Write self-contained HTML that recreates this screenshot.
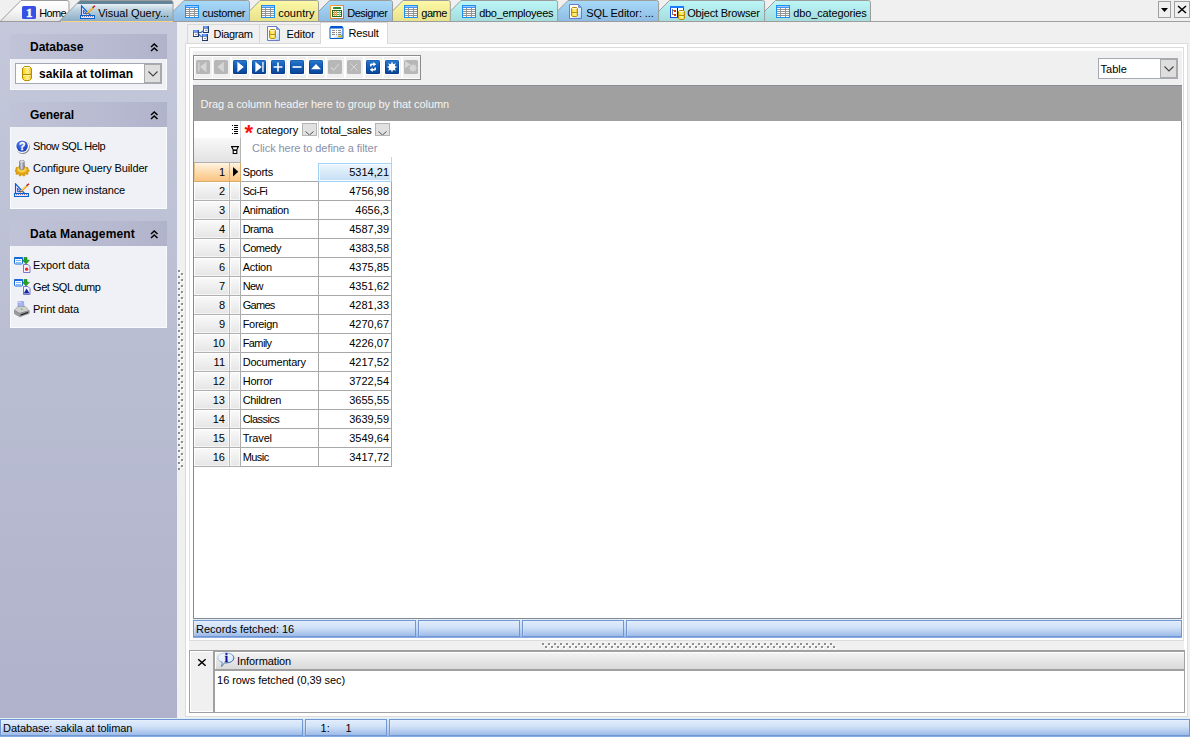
<!DOCTYPE html>
<html><head><meta charset="utf-8"><title>Visual Query Builder - Result</title>
<style>
*{box-sizing:border-box;margin:0;padding:0}
html,body{width:1190px;height:737px;overflow:hidden;background:#f0f0f0}
body{font-family:"Liberation Sans",sans-serif;font-size:11px;color:#000;position:relative}
div,span,svg{position:absolute}
.t{white-space:nowrap;line-height:12px;font-size:11px}
.t.b{font-weight:bold;font-size:12px;line-height:14px}
svg text{font-family:"Liberation Sans",sans-serif;font-size:11px}
#side{left:0;top:22px;width:177px;height:696px;background:linear-gradient(#c4c8da,#afb2ca)}
.ph{left:10px;width:157px;height:25px;background:linear-gradient(90deg,#c1c4d8 0,#bbbed3 40%,#b1b3cb 100%)}
.pc{left:10px;width:157px;background:#eff1f7;border:1px solid #fafbfd;border-top:none}
.frame{border:1px solid #dcdcdc;background:#fff}
.bluebar{background:linear-gradient(#e6f0fc 0,#dae7fa 12%,#c6daf5 50%,#a2bfea 88%,#7fa7e1 100%)}
.sec{border:1px solid #7197d3;background:linear-gradient(#e0ecfc 0,#d3e3f8 40%,#bdd3f2 65%,#9dbbe9 100%);box-shadow:inset 1px 1px 0 rgba(255,255,255,.2)}
.rh{left:194px;width:47px;height:19px;background:linear-gradient(#fafafa,#e5e5e5);border-right:1px solid #adadad;border-bottom:1px solid #b0b0b0;box-shadow:inset 1px 1px 0 #fff,inset -1px -1px 0 rgba(255,255,255,.6)}
.rh i{position:absolute;left:0;top:0;width:36px;height:18px;border-right:1px solid #b8b8b8;box-shadow:1px 0 0 rgba(255,255,255,.8),inset -1px 0 0 rgba(255,255,255,.6)}
.c1{left:241px;width:78px;height:19px;border-right:1px solid #a8a8a8;border-bottom:1px solid #a8a8a8;background:#fff}
.c2{left:319px;width:73px;height:19px;border-right:1px solid #a8a8a8;border-bottom:1px solid #a8a8a8;background:#fff}
.ddb{width:15px;height:13px;background:#e1e1e1;border:1px solid #b4b4b4;overflow:hidden}
.tb{width:14px;height:14px;top:60px;border-radius:1.5px}
.tb.on{background:linear-gradient(#2f80d4 0,#1c68c0 25%,#0f56ae 60%,#084494 100%);box-shadow:0 0 0 1px #fff,inset 0 0 0 1px rgba(0,40,110,.3)}
.tb.off{background:#b7b7b7}
.tc{top:57px;width:17px;height:21px;background:#f0f0f0}
</style></head>
<body>
<svg width="0" height="0" style="left:-10px"><defs>
<linearGradient id="gdb" x1="0" x2="1" y1="0" y2="0"><stop offset="0" stop-color="#f4c818"/><stop offset=".35" stop-color="#ffe850"/><stop offset=".6" stop-color="#fff0a0"/><stop offset="1" stop-color="#ecb810"/></linearGradient>
<linearGradient id="gdoc" x1="0" x2="1" y1="0" y2="1"><stop offset="0" stop-color="#fff"/><stop offset=".5" stop-color="#f4f8ff"/><stop offset="1" stop-color="#a4d4f8"/></linearGradient>
<linearGradient id="gor" x1="0" x2="1" y1="0" y2="1"><stop offset="0" stop-color="#f8a840"/><stop offset="1" stop-color="#b87430"/></linearGradient>
<linearGradient id="gres" x1="0" x2="1" y1="0" y2="1"><stop offset="0" stop-color="#fff"/><stop offset=".5" stop-color="#fff"/><stop offset="1" stop-color="#80b8ff"/></linearGradient>
<radialGradient id="ghelp" cx=".4" cy=".3" r=".8"><stop offset="0" stop-color="#5c84f0"/><stop offset=".6" stop-color="#2450d0"/><stop offset="1" stop-color="#1838a8"/></radialGradient>
<linearGradient id="gcyl" x1="0" x2="1" y1="0" y2="0"><stop offset="0" stop-color="#888894"/><stop offset=".4" stop-color="#d0d0dc"/><stop offset="1" stop-color="#80808c"/></linearGradient>
<linearGradient id="ginfo" x1="0" x2="1" y1="0" y2="1"><stop offset="0" stop-color="#f4f9ff"/><stop offset="1" stop-color="#cfe4fa"/></linearGradient>
<linearGradient id="ginfos" x1="0" x2="1" y1="0" y2="1"><stop offset="0" stop-color="#d4e4f8"/><stop offset=".4" stop-color="#86a6d2"/><stop offset=".75" stop-color="#2c5696"/><stop offset="1" stop-color="#1c4484"/></linearGradient>
<linearGradient id="tHome" x1="0" x2="0" y1="0" y2="1"><stop offset="0" stop-color="#fff"/><stop offset=".5" stop-color="#f6f6f6"/><stop offset="1" stop-color="#e2e2e2"/></linearGradient>
<linearGradient id="tBlue" x1="0" x2="0" y1="0" y2="1"><stop offset="0" stop-color="#a8dafa"/><stop offset="1" stop-color="#8ebbe2"/></linearGradient>
<linearGradient id="tYel" x1="0" x2="0" y1="0" y2="1"><stop offset="0" stop-color="#fdf9a6"/><stop offset="1" stop-color="#e8e18c"/></linearGradient>
<linearGradient id="tCyan" x1="0" x2="0" y1="0" y2="1"><stop offset="0" stop-color="#bcf6f6"/><stop offset="1" stop-color="#a4dcdc"/></linearGradient>
<linearGradient id="tAct" x1="0" x2="0" y1="0" y2="1"><stop offset="0" stop-color="#5e8299"/><stop offset=".17" stop-color="#628599"/><stop offset=".19" stop-color="#e6eef4"/><stop offset=".45" stop-color="#bcd2e0"/><stop offset="1" stop-color="#88acc6"/></linearGradient>
</defs></svg>
<svg id="tabbar" width="1190" height="23" style="left:0;top:0"><rect x="0" y="21" width="1190" height="1" fill="#a0a0a0"/><path d="M0,21.5L21,.5H67Q69,.5 69,2.5V21.5z" fill="url(#tHome)" stroke="#9c9c9c"/><g transform="translate(22,6)"><rect x="0" y="0" width="14" height="13" rx="1.6" fill="#3650e4"/><text x="7.2" y="11" text-anchor="middle" font-weight="bold" fill="#fff" stroke="#fff" stroke-width=".5" style="font-family:'Liberation Serif',serif;font-size:13px">1</text></g><text x="39.2" y="17" letter-spacing="-0.60">Home</text><path d="M754.5,21.5L775.5,.5H868.5Q870.5,.5 870.5,2.5V21.5z" fill="url(#tCyan)" stroke="#9c9c9c"/><g transform="translate(776,5)"><rect x=".5" y=".5" width="13" height="12" fill="#fff" stroke="#1c90f0"/><rect x="1" y="1" width="12" height="1" fill="#9cc8ff"/><rect x="1" y="2" width="12" height="1" fill="#3c96f4"/><rect x="1" y="4" width="12" height="1" fill="#949494"/><rect x="1" y="6" width="12" height="1" fill="#949494"/><rect x="1" y="8" width="12" height="1" fill="#949494"/><rect x="1" y="10" width="12" height="1" fill="#949494"/><rect x="4" y="3" width="1" height="9" fill="#949494"/><rect x="9" y="3" width="1" height="9" fill="#949494"/></g><text x="793.2" y="17" letter-spacing="-0.13">dbo_categories</text><path d="M648.5,21.5L669.5,.5H762.6Q764.6,.5 764.6,2.5V21.5z" fill="url(#tCyan)" stroke="#9c9c9c"/><g transform="translate(670,6)"><rect x=".5" y=".5" width="13" height="11" fill="#fff" stroke="#1644f0"/><rect x="0" y="0" width="14" height="2" fill="#1c7cff"/><path d="M2.5,3v6M2.5,4.5h2M2.5,8.5h2" stroke="#707880" fill="none"/><rect x="4" y="4" width="2" height="2" fill="#d03810"/><rect x="4" y="8" width="2" height="2" fill="#d03810"/><rect x="7" y="2" width="1" height="9" fill="#202020"/><g transform="translate(8,4)"><path d="M1.5,.5h4l1,1v7l-1,1h-4l-1,-1v-7z" fill="url(#gdb)" stroke="#b98d00"/><path d="M1.2,1.5h4.6" stroke="#fffbe0" stroke-width="1"/><path d="M1,5.5h5" stroke="#b98d00"/><path d="M1.5,6.5h4" stroke="#fff4a0"/></g></g><text x="687.2" y="17" letter-spacing="-0.19">Object Browser</text><path d="M547,21.5L568,.5H656.6Q658.6,.5 658.6,2.5V21.5z" fill="url(#tBlue)" stroke="#9c9c9c"/><g transform="translate(569,4)"><path d="M.5,.5h9l3,3v11h-12z" fill="url(#gdoc)" stroke="#6c7cc4"/><path d="M9.5,.5v3h3z" fill="#48a4ff" stroke="#6c7cc4" stroke-width=".6"/><g transform="translate(2,3)"><path d="M1.5,.5h4l1,1v7l-1,1h-4l-1,-1v-7z" fill="url(#gdb)" stroke="#b98d00"/><path d="M1.2,1.5h4.6" stroke="#fffbe0" stroke-width="1"/><path d="M1,5.5h5" stroke="#b98d00"/><path d="M1.5,6.5h4" stroke="#fff4a0"/></g></g><text x="586.2" y="17" letter-spacing="-0.07">SQL Editor: ...</text><path d="M440,21.5L461,.5H555.6Q557.6,.5 557.6,2.5V21.5z" fill="url(#tCyan)" stroke="#9c9c9c"/><g transform="translate(462,5)"><rect x=".5" y=".5" width="13" height="12" fill="#fff" stroke="#1c90f0"/><rect x="1" y="1" width="12" height="1" fill="#9cc8ff"/><rect x="1" y="2" width="12" height="1" fill="#3c96f4"/><rect x="1" y="4" width="12" height="1" fill="#949494"/><rect x="1" y="6" width="12" height="1" fill="#949494"/><rect x="1" y="8" width="12" height="1" fill="#949494"/><rect x="1" y="10" width="12" height="1" fill="#949494"/><rect x="4" y="3" width="1" height="9" fill="#949494"/><rect x="9" y="3" width="1" height="9" fill="#949494"/></g><text x="479.2" y="17" letter-spacing="-0.28">dbo_employees</text><path d="M382,21.5L403,.5H448.3Q450.3,.5 450.3,2.5V21.5z" fill="url(#tYel)" stroke="#9c9c9c"/><g transform="translate(404,5)"><rect x=".5" y=".5" width="13" height="12" fill="#fff" stroke="#1c90f0"/><rect x="1" y="1" width="12" height="1" fill="#9cc8ff"/><rect x="1" y="2" width="12" height="1" fill="#3c96f4"/><rect x="1" y="4" width="12" height="1" fill="#949494"/><rect x="1" y="6" width="12" height="1" fill="#949494"/><rect x="1" y="8" width="12" height="1" fill="#949494"/><rect x="1" y="10" width="12" height="1" fill="#949494"/><rect x="4" y="3" width="1" height="9" fill="#949494"/><rect x="9" y="3" width="1" height="9" fill="#949494"/></g><text x="421.2" y="17" letter-spacing="-0.43">game</text><path d="M308.5,21.5L329.5,.5H390.5Q392.5,.5 392.5,2.5V21.5z" fill="url(#tBlue)" stroke="#9c9c9c"/><g transform="translate(330,5)"><rect x=".5" y=".5" width="13" height="13" fill="#fff" stroke="url(#gor)"/><rect x="3" y="2" width="8" height="2" rx=".6" fill="#2a8c2a"/><rect x="2.5" y="5.5" width="9" height="6" fill="#fff" stroke="#1e6e1e"/><path d="M3,7.5h8M3,9.5h8" stroke="#48b048"/><path d="M4.5,6v5M6.5,6v5M9.5,6v5" stroke="#e8a868"/></g><text x="347.2" y="17" letter-spacing="-0.47">Designer</text><path d="M239,21.5L260,.5H316.5Q318.5,.5 318.5,2.5V21.5z" fill="url(#tYel)" stroke="#9c9c9c"/><g transform="translate(261,5)"><rect x=".5" y=".5" width="13" height="12" fill="#fff" stroke="#1c90f0"/><rect x="1" y="1" width="12" height="1" fill="#9cc8ff"/><rect x="1" y="2" width="12" height="1" fill="#3c96f4"/><rect x="1" y="4" width="12" height="1" fill="#949494"/><rect x="1" y="6" width="12" height="1" fill="#949494"/><rect x="1" y="8" width="12" height="1" fill="#949494"/><rect x="1" y="10" width="12" height="1" fill="#949494"/><rect x="4" y="3" width="1" height="9" fill="#949494"/><rect x="9" y="3" width="1" height="9" fill="#949494"/></g><text x="278.2" y="17" letter-spacing="0.03">country</text><path d="M163,21.5L184,.5H247.5Q249.5,.5 249.5,2.5V21.5z" fill="url(#tBlue)" stroke="#9c9c9c"/><g transform="translate(185,5)"><rect x=".5" y=".5" width="13" height="12" fill="#fff" stroke="#1c90f0"/><rect x="1" y="1" width="12" height="1" fill="#9cc8ff"/><rect x="1" y="2" width="12" height="1" fill="#3c96f4"/><rect x="1" y="4" width="12" height="1" fill="#949494"/><rect x="1" y="6" width="12" height="1" fill="#949494"/><rect x="1" y="8" width="12" height="1" fill="#949494"/><rect x="1" y="10" width="12" height="1" fill="#949494"/><rect x="4" y="3" width="1" height="9" fill="#949494"/><rect x="9" y="3" width="1" height="9" fill="#949494"/></g><text x="202.2" y="17" letter-spacing="-0.28">customer</text><path d="M59,21.5L80,.5H171Q173,.5 173,2.5V21.5z" fill="url(#tAct)" stroke="#9c9c9c"/><g transform="translate(80,5)"><path d="M1.5,.8v9.7h9.2z" fill="#e4dcff" stroke="#0560d0" stroke-width="1.1"/><path d="M3.6,5.2v3.4h3.2z" fill="#e4dcff" stroke="#0560d0" stroke-width="1"/><rect x=".5" y="10.5" width="14" height="3" fill="#eadfff" stroke="#0560d0"/><path d="M2.5,11v1M4.5,11v1M6.5,11v1M8.5,11v1M10.5,11v1M12.5,11v1" stroke="#6a5a70" stroke-width=".8"/><path d="M6.2,9.2l.6,-1.6l6,-5.6l1,1l-6,5.6z" fill="#f8a020" stroke="#e08010" stroke-width=".4"/><path d="M7.3,7.6l5.2,-4.9" stroke="#ffe040" stroke-width=".8"/><path d="M6,9.6l.7,-1.9l1.1,1.1z" fill="#5a4030"/><path d="M12.2,2.2l1.2,-1.1l1,1l-1.2,1.1z" fill="#404850"/><path d="M13.3,1.2l1.1,-1l1.1,1.1l-1.1,1z" fill="#e81020"/></g><text x="98.2" y="17" letter-spacing="-0.01">Visual Query...</text><rect x="61" y="21" width="112" height="1" fill="#ffd27f"/><rect x="1158.5" y="1.5" width="12" height="16" fill="#f0f0f0" stroke="#a0a0a0"/><path d="M1161,8h7l-3.5,4z" fill="#000"/><rect x="1174.5" y="1.5" width="15" height="16" fill="#f0f0f0" stroke="#a0a0a0"/><path d="M1178,6l8,7M1186,6l-8,7" stroke="#000" stroke-width="1.5"/></svg>
<div id="side"><div class="ph" style="top:12px"></div><span class="t b" style="top:18px;left:30.0px;">Database</span><svg width="9" height="9" style="left:150px;top:21px"><path d="M1,4L4.25,1L7.5,4M1,8L4.25,5L7.5,8" fill="none" stroke="#000" stroke-width="1.5"/></svg><div class="pc" style="top:37px;height:31px"></div><div style="left:15px;top:41px;width:147px;height:21px;background:#fff;border:1px solid #a4a8b4"></div><div style="left:144px;top:42px;width:17px;height:19px;background:#dedede;border:1px solid #aaa"></div><svg width="12" height="8" style="left:147px;top:48px"><path d="M1.5,1.5L6,6L10.5,1.5" fill="none" stroke="#444" stroke-width="1.1"/></svg><svg width="12" height="16" style="left:22px;top:44px"><g transform="translate(0,0)"><path d="M2.5,.5h5l2,2v10l-2,2h-5l-2,-2v-10z" fill="url(#gdb)" stroke="#b98d00"/><path d="M2.2,1.5h5.6" stroke="#fffbe0" stroke-width="1"/><path d="M1,8.5h8" stroke="#b98d00"/><path d="M1.5,9.5h7" stroke="#fff4a0"/></g></svg><span class="t b" style="top:45px;left:39.0px;letter-spacing:0.04px;">sakila at toliman</span><div class="ph" style="top:80px"></div><span class="t b" style="top:86px;left:30.0px;letter-spacing:-0.10px;">General</span><svg width="9" height="9" style="left:150px;top:89px"><path d="M1,4L4.25,1L7.5,4M1,8L4.25,5L7.5,8" fill="none" stroke="#000" stroke-width="1.5"/></svg><div class="pc" style="top:105px;height:82px"></div><svg width="17" height="17" style="left:15px;top:117px"><g transform="translate(0,0)"><circle cx="7.9" cy="8" r="6.9" fill="#686878" opacity=".8"/><circle cx="7.1" cy="7.1" r="7" fill="#fff"/><circle cx="7.1" cy="7.1" r="5.7" fill="url(#ghelp)"/><text x="7.1" y="10.8" text-anchor="middle" font-weight="bold" fill="#fff" stroke="#fff" stroke-width=".3" style="font-size:10.5px">?</text></g></svg><span class="t" style="top:118px;left:33.1px;letter-spacing:-0.45px;">Show SQL Help</span><svg width="17" height="18" style="left:15px;top:138px"><g transform="translate(0,0)"><ellipse cx="7" cy="10.6" rx="6.2" ry="4.4" fill="#e4a818" stroke="#c48c10" stroke-width=".5"/><circle cx="13.3" cy="10.8" r="1.3" fill="#d89c10"/><circle cx="12.1" cy="13.4" r="1.3" fill="#d89c10"/><circle cx="8.9" cy="15.1" r="1.3" fill="#d89c10"/><circle cx="5.1" cy="15.1" r="1.3" fill="#d89c10"/><circle cx="1.9" cy="13.4" r="1.3" fill="#d89c10"/><circle cx="0.7" cy="10.8" r="1.3" fill="#d89c10"/><circle cx="1.9" cy="8.2" r="1.3" fill="#d89c10"/><circle cx="5.1" cy="6.5" r="1.3" fill="#d89c10"/><circle cx="8.9" cy="6.5" r="1.3" fill="#d89c10"/><circle cx="12.1" cy="8.2" r="1.3" fill="#d89c10"/><ellipse cx="7" cy="9.6" rx="4.6" ry="2.8" fill="#f8d048"/><rect x="4.5" y=".2" width="4.8" height="9.4" rx="1.6" fill="url(#gcyl)" stroke="#686878" stroke-width=".5"/><ellipse cx="7" cy="1.4" rx="2.2" ry="1" fill="#d8d8e0"/></g></svg><span class="t" style="top:140px;left:33.1px;letter-spacing:-0.14px;">Configure Query Builder</span><svg width="17" height="15" style="left:14px;top:161px"><g transform="translate(0,0)"><path d="M1.5,.8v9.7h9.2z" fill="#e4dcff" stroke="#0560d0" stroke-width="1.1"/><path d="M3.6,5.2v3.4h3.2z" fill="#e4dcff" stroke="#0560d0" stroke-width="1"/><rect x=".5" y="10.5" width="14" height="3" fill="#eadfff" stroke="#0560d0"/><path d="M2.5,11v1M4.5,11v1M6.5,11v1M8.5,11v1M10.5,11v1M12.5,11v1" stroke="#6a5a70" stroke-width=".8"/><path d="M6.2,9.2l.6,-1.6l6,-5.6l1,1l-6,5.6z" fill="#f8a020" stroke="#e08010" stroke-width=".4"/><path d="M7.3,7.6l5.2,-4.9" stroke="#ffe040" stroke-width=".8"/><path d="M6,9.6l.7,-1.9l1.1,1.1z" fill="#5a4030"/><path d="M12.2,2.2l1.2,-1.1l1,1l-1.2,1.1z" fill="#404850"/><path d="M13.3,1.2l1.1,-1l1.1,1.1l-1.1,1z" fill="#e81020"/></g></svg><span class="t" style="top:162px;left:33.1px;letter-spacing:-0.13px;">Open new instance</span><div class="ph" style="top:199px"></div><span class="t b" style="top:205px;left:30.0px;letter-spacing:0.15px;">Data Management</span><svg width="9" height="9" style="left:150px;top:208px"><path d="M1,4L4.25,1L7.5,4M1,8L4.25,5L7.5,8" fill="none" stroke="#000" stroke-width="1.5"/></svg><div class="pc" style="top:224px;height:82px"></div><svg width="17" height="17" style="left:14px;top:235px"><g transform="translate(0,0)"><rect x=".5" y=".5" width="8" height="6.5" rx="1" fill="#fff" stroke="#1468e0"/><rect x="0" y="0" width="9" height="2" rx="1" fill="#1468e0"/><path d="M2,3.5h5M2,5.5h5" stroke="#7cb8f8"/><path d="M10,.2h3v3h2.4l-3.4,3.8l-3.6,-3.8h1.6z" fill="#28a028" stroke="#0a7a0a" stroke-width=".5"/><path d="M9.5,7.5h4.5l2,2v6h-6.5z" fill="#f4f0ff" stroke="#7c78c8"/><circle cx="12.6" cy="12.2" r="1.6" fill="#f02818"/></g></svg><span class="t" style="top:237px;left:33.1px;letter-spacing:0.02px;">Export data</span><svg width="17" height="17" style="left:14px;top:257px"><g transform="translate(0,0)"><rect x=".5" y=".5" width="8" height="6.5" rx="1" fill="#fff" stroke="#1468e0"/><rect x="0" y="0" width="9" height="2" rx="1" fill="#1468e0"/><path d="M2,3.5h5M2,5.5h5" stroke="#7cb8f8"/><path d="M10,.2h3v3h2.4l-3.4,3.8l-3.6,-3.8h1.6z" fill="#28a028" stroke="#0a7a0a" stroke-width=".5"/><path d="M9.5,7.5h4.5l2,2v6h-6.5z" fill="#f4f0ff" stroke="#7c78c8"/><path d="M12.6,9.6l3,5h-6z" fill="#1428a0"/></g></svg><span class="t" style="top:259px;left:33.1px;letter-spacing:-0.47px;">Get SQL dump</span><svg width="17" height="17" style="left:14px;top:279px"><g transform="translate(0,0)"><path d="M4,.5h5.4l.8,6h-6.2z" fill="#a8b4f0" stroke="#8090d8" stroke-width=".6"/><path d="M4,.5h3v1.4h-3z" fill="#c8d0ff"/><path d="M4,5.5h7.2l4,4.2l-9.6,2.6l-5.4,-3z" fill="#d0d0d0" stroke="#8c8c8c" stroke-width=".6"/><path d="M.3,9.4l5.4,3l9.5,-2.6v2.6l-9.5,3.4l-5.4,-3.2z" fill="#9c9c9c" stroke="#707070" stroke-width=".5"/><path d="M6.5,13.4l7.6,-2.6v1.2l-7.6,2.7z" fill="#202020"/><rect x="7" y="7.6" width="1.6" height="1" fill="#30c030"/></g></svg><span class="t" style="top:281px;left:33.1px;letter-spacing:-0.11px;">Print data</span></div>
<svg width="7" height="202" style="left:178px;top:270px"><defs><pattern id="pdv" width="6" height="6" patternUnits="userSpaceOnUse"><rect x="1" y="1" width="2" height="2" fill="#fff"/><rect x="0" y="0" width="2" height="2" fill="#8e8e8e"/><rect x="4" y="4" width="2" height="2" fill="#fff"/><rect x="3" y="3" width="2" height="2" fill="#8e8e8e"/></pattern></defs><rect width="6" height="200" fill="url(#pdv)"/></svg><div class="frame" style="left:185px;top:43px;width:1003px;height:674px"></div><div style="left:187px;top:24px;width:73px;height:20px;background:#f0f0f0;border:1px solid #d9d9d9"></div><div style="left:259px;top:24px;width:62px;height:20px;background:#f0f0f0;border:1px solid #d9d9d9"></div><div style="left:320px;top:22px;width:68px;height:22px;background:#fff;border:1px solid #d9d9d9;border-bottom:none"></div><svg width="17" height="16" style="left:193px;top:26px"><g transform="translate(0,0)"><path d="M6,6.5l2,0l2,-1.5M6,8.5l1.5,1.5l2,.5" stroke="#2c58c0" fill="none" stroke-width="1.1"/><rect x="0" y="4" width="6" height="7" fill="#1e3660"/><rect x="0" y="4" width="5.4" height="2.4" fill="#3c74e4"/><rect x="0.8" y="4.5" width="3.4" height="1" fill="#9cc0ff"/><rect x="0.8" y="6.6" width="4" height="3.4" fill="#fff"/><rect x="2" y="7.9" width="2" height="1" fill="#8090b0"/><rect x="10" y="0" width="6" height="7" fill="#1e3660"/><rect x="10" y="0" width="5.4" height="2.4" fill="#3c74e4"/><rect x="10.8" y="0.5" width="3.4" height="1" fill="#9cc0ff"/><rect x="10.8" y="2.6" width="4" height="3.4" fill="#fff"/><rect x="12" y="3.9" width="2" height="1" fill="#8090b0"/><rect x="9" y="8" width="6" height="7" fill="#1e3660"/><rect x="9" y="8" width="5.4" height="2.4" fill="#3c74e4"/><rect x="9.8" y="8.5" width="3.4" height="1" fill="#9cc0ff"/><rect x="9.8" y="10.6" width="4" height="3.4" fill="#fff"/><rect x="11" y="11.9" width="2" height="1" fill="#8090b0"/></g></svg><span class="t" style="top:28px;left:213.6px;letter-spacing:-0.37px;">Diagram</span><svg width="14" height="16" style="left:267px;top:26px"><g transform="translate(0,0)"><path d="M.5,.5h9l3,3v11h-12z" fill="url(#gdoc)" stroke="#6c7cc4"/><path d="M9.5,.5v3h3z" fill="#48a4ff" stroke="#6c7cc4" stroke-width=".6"/><g transform="translate(2,3)"><path d="M1.5,.5h4l1,1v7l-1,1h-4l-1,-1v-7z" fill="url(#gdb)" stroke="#b98d00"/><path d="M1.2,1.5h4.6" stroke="#fffbe0" stroke-width="1"/><path d="M1,5.5h5" stroke="#b98d00"/><path d="M1.5,6.5h4" stroke="#fff4a0"/></g></g></svg><span class="t" style="top:28px;left:286.6px;letter-spacing:-0.12px;">Editor</span><svg width="16" height="14" style="left:329px;top:26px"><g transform="translate(0,0)"><path d="M1,1.6h13v10.9h-13z" fill="url(#gres)" stroke="#0058d0" stroke-width="1"/><rect x="1.2" y="0" width="12.6" height="2.4" rx=".8" fill="#0058d0"/><rect x="3" y="4" width="3" height="1" fill="#8a8a8a"/><rect x="7" y="4" width="1" height="1" fill="#8a8a8a"/><rect x="9" y="4" width="3" height="1" fill="#8a8a8a"/><rect x="3" y="6" width="3" height="1" fill="#8a8a8a"/><rect x="7" y="6" width="1" height="1" fill="#8a8a8a"/><rect x="9" y="6" width="3" height="1" fill="#8a8a8a"/><rect x="3" y="8" width="3" height="1" fill="#8a8a8a"/><rect x="7" y="8" width="1" height="1" fill="#8a8a8a"/><rect x="9" y="8" width="3" height="1" fill="#8a8a8a"/><path d="M9,10.5h3.5v-1.6" stroke="#c6b600" stroke-width="1.3" fill="none"/></g></svg><span class="t" style="top:27px;left:348.6px;letter-spacing:-0.20px;">Result</span><div style="left:189px;top:641px;width:995px;height:10px;background:#f0f0f0"></div><div class="frame" style="left:189px;top:47px;width:995px;height:594px"></div><div style="left:193px;top:51px;width:989px;height:34px;background:#f0f0f0"></div><div style="left:193px;top:55px;width:228px;height:25px;background:#fff;border:1px solid #8c8c8c"></div><div class="tc" style="left:195px"></div><div class="tb off" style="left:196px"><svg width="14" height="14" style="left:0;top:0"><path d="M2.2,2.5h1.3v9h-1.3z M10.4,1.8v10.4L4,7z" fill="#d6d6d6"/></svg></div><div class="tc" style="left:213px"></div><div class="tb off" style="left:214px"><svg width="14" height="14" style="left:0;top:0"><path d="M9.8,1.8v10.4L3.4,7z" fill="#d6d6d6"/></svg></div><div class="tc" style="left:232px"></div><div class="tb on" style="left:233px"><svg width="14" height="14" style="left:0;top:0"><path d="M4.4,1.8v10.4L10.8,7z" fill="#fff"/></svg></div><div class="tc" style="left:251px"></div><div class="tb on" style="left:252px"><svg width="14" height="14" style="left:0;top:0"><path d="M3.4,1.8v10.4L9.8,7z M10.3,2h1.3v10h-1.3z" fill="#fff"/></svg></div><div class="tc" style="left:270px"></div><div class="tb on" style="left:271px"><svg width="14" height="14" style="left:0;top:0"><path d="M6.2,2.6h1.6v3.6h3.6v1.6h-3.6v3.6h-1.6v-3.6h-3.6v-1.6h3.6z" fill="#fff"/></svg></div><div class="tc" style="left:289px"></div><div class="tb on" style="left:290px"><svg width="14" height="14" style="left:0;top:0"><path d="M2.5,6.2h9v1.6h-9z" fill="#fff"/></svg></div><div class="tc" style="left:308px"></div><div class="tb on" style="left:309px"><svg width="14" height="14" style="left:0;top:0"><path d="M7,4l5,5.2h-10z" fill="#fff"/></svg></div><div class="tc" style="left:327px"></div><div class="tb off" style="left:328px"><svg width="14" height="14" style="left:0;top:0"><path d="M3,7.5l2.5,2.5l5.5,-6" fill="none" stroke="#d6d6d6" stroke-width="1.1"/></svg></div><div class="tc" style="left:346px"></div><div class="tb off" style="left:347px"><svg width="14" height="14" style="left:0;top:0"><path d="M3.5,3.5l7,7M10.5,3.5l-7,7" fill="none" stroke="#d6d6d6" stroke-width="1"/></svg></div><div class="tc" style="left:365px"></div><div class="tb on" style="left:366px"><svg width="14" height="14" style="left:0;top:0"><path d="M4,6.4v-1.6q0,-1.3 1.3,-1.3h2v-1.5l2.9,2.3l-2.9,2.3v-1.5h-1.2q-.5,0 -.5,.5v.8z" fill="#fff"/><path d="M4,6.4v-1.6q0,-1.3 1.3,-1.3h2v-1.5l2.9,2.3l-2.9,2.3v-1.5h-1.2q-.5,0 -.5,.5v.8z" fill="#fff" transform="rotate(180 7 7)"/></svg></div><div class="tc" style="left:384px"></div><div class="tb on" style="left:385px"><svg width="14" height="14" style="left:0;top:0"><path d="M7.00,1.60L8.11,4.32L10.82,3.18L9.68,5.89L12.40,7.00L9.68,8.11L10.82,10.82L8.11,9.68L7.00,12.40L5.89,9.68L3.18,10.82L4.32,8.11L1.60,7.00L4.32,5.89L3.18,3.18L5.89,4.32z" fill="#fff"/><circle cx="7" cy="7" r="3.2" fill="#fff"/></svg></div><div class="tc" style="left:403px"></div><div class="tb off" style="left:404px"><svg width="14" height="14" style="left:0;top:0"><path d="M1,1l5.4,3.6l-5.4,3.6z" fill="#d6d6d6"/><path d="M9.00,3.40L9.96,5.69L12.25,4.75L11.31,7.04L13.60,8.00L11.31,8.96L12.25,11.25L9.96,10.31L9.00,12.60L8.04,10.31L5.75,11.25L6.69,8.96L4.40,8.00L6.69,7.04L5.75,4.75L8.04,5.69z" fill="#d6d6d6"/><circle cx="9" cy="8" r="2.7" fill="#d6d6d6"/></svg></div><div style="left:1098px;top:58px;width:80px;height:21px;background:#fff;border:1px solid #a6aab4"></div><div style="left:1160px;top:59px;width:17px;height:19px;background:#dedede;border:1px solid #aaa"></div><svg width="12" height="8" style="left:1163px;top:65px"><path d="M1.5,1.5L6,6L10.5,1.5" fill="none" stroke="#444" stroke-width="1.1"/></svg><span class="t" style="top:63px;left:1100.6px;">Table</span><div style="left:193px;top:85px;width:989px;height:36px;background:#a0a0a0;border-top:1px solid #8a8e96;border-left:1px solid #8a8e96"></div><span class="t" style="top:98px;left:200.6px;letter-spacing:-0.07px;color:#f4f4f4;">Drag a column header here to group by that column</span><div style="left:193px;top:121px;width:989px;height:498px;background:#fff;border:1px solid #868a90;border-top:none"></div><svg width="8" height="10" style="left:232px;top:125px"><path d="M0,.5h1M2,.5h4M2,2.5h4M0,4.5h1M2,4.5h4M2,6.5h4M0,8.5h1M2,8.5h4" stroke="#000"/></svg><div style="left:240px;top:121px;width:1px;height:17px;background:#d4d4d4"></div><div style="left:318px;top:121px;width:1px;height:17px;background:#d4d4d4"></div><span class="t" style="left:244.5px;top:122px;font-size:22px;line-height:22px;font-weight:bold;color:#ff1010">*</span><span class="t" style="top:123.5px;left:256.6px;letter-spacing:-0.09px;">category</span><span class="t" style="top:123.5px;left:320.6px;letter-spacing:-0.14px;">total_sales</span><div class="ddb" style="left:302px;top:123px"><svg width="13" height="11" style="left:0;top:0"><path d="M2.5,7.5L6.5,11L10.5,7.5" fill="none" stroke="#555" stroke-width="1"/></svg></div><div class="ddb" style="left:375px;top:123px"><svg width="13" height="11" style="left:0;top:0"><path d="M2.5,7.5L6.5,11L10.5,7.5" fill="none" stroke="#555" stroke-width="1"/></svg></div><div style="left:194px;top:138px;width:46px;height:24px;background:linear-gradient(#f8f8f8,#e2e2e2)"></div><div style="left:240px;top:138px;width:1px;height:24px;background:#b4b4b4"></div><svg width="10" height="10" style="left:231px;top:146px"><path d="M.6,.6h6.8l-1.7,3.4h-3.4z" fill="#fff" stroke="#000" stroke-width="1.1"/><rect x="2.2" y="4.4" width="3.6" height="3.1" fill="#fff" stroke="#000" stroke-width="1.1"/></svg><span class="t" style="top:142px;left:252.1px;letter-spacing:-0.07px;color:#8a90a8;">Click here to define a filter</span><div style="left:391px;top:157px;width:1px;height:6px;background:#d0d0d0"></div><div style="left:194px;top:162px;width:47px;height:1px;background:#b0b0b0"></div><div class="rh" style="top:163px;background:linear-gradient(#fff3e2,#fdd9a8 55%,#fbc583);border-color:#d8aa6c;box-shadow:inset 1px 0 0 #e8c48c"><i style="border-color:#dcb078;box-shadow:none"></i></div><svg width="6" height="10" style="left:233px;top:167px"><path d="M0,0L5.3,4.7L0,9.4z" fill="#000"/></svg><span class="t" style="top:166px;right:965px;">1</span><div class="c1" style="top:163px"></div><span class="t" style="top:166px;left:242.7px;letter-spacing:-0.27px;">Sports</span><div class="c2" style="top:163px;left:318px;width:74px;background:linear-gradient(#eef7fd,#d4e7f7 60%,#c4ddf3);border:1px solid #a4d4f4;box-shadow:inset 0 0 0 1px #f4faff"></div><span class="t" style="top:166px;right:801px;">5314,21</span><div class="rh" style="top:182px"><i></i></div><span class="t" style="top:185px;right:965px;">2</span><div class="c1" style="top:182px"></div><span class="t" style="top:185px;left:242.7px;letter-spacing:-0.60px;">Sci-Fi</span><div class="c2" style="top:182px"></div><span class="t" style="top:185px;right:801px;">4756,98</span><div class="rh" style="top:201px"><i></i></div><span class="t" style="top:204px;right:965px;">3</span><div class="c1" style="top:201px"></div><span class="t" style="top:204px;left:242.7px;letter-spacing:-0.31px;">Animation</span><div class="c2" style="top:201px"></div><span class="t" style="top:204px;right:801px;">4656,3</span><div class="rh" style="top:220px"><i></i></div><span class="t" style="top:223px;right:965px;">4</span><div class="c1" style="top:220px"></div><span class="t" style="top:223px;left:242.7px;letter-spacing:-0.56px;">Drama</span><div class="c2" style="top:220px"></div><span class="t" style="top:223px;right:801px;">4587,39</span><div class="rh" style="top:239px"><i></i></div><span class="t" style="top:242px;right:965px;">5</span><div class="c1" style="top:239px"></div><span class="t" style="top:242px;left:242.7px;letter-spacing:-0.44px;">Comedy</span><div class="c2" style="top:239px"></div><span class="t" style="top:242px;right:801px;">4383,58</span><div class="rh" style="top:258px"><i></i></div><span class="t" style="top:261px;right:965px;">6</span><div class="c1" style="top:258px"></div><span class="t" style="top:261px;left:242.7px;letter-spacing:-0.23px;">Action</span><div class="c2" style="top:258px"></div><span class="t" style="top:261px;right:801px;">4375,85</span><div class="rh" style="top:277px"><i></i></div><span class="t" style="top:280px;right:965px;">7</span><div class="c1" style="top:277px"></div><span class="t" style="top:280px;left:242.7px;letter-spacing:-0.57px;">New</span><div class="c2" style="top:277px"></div><span class="t" style="top:280px;right:801px;">4351,62</span><div class="rh" style="top:296px"><i></i></div><span class="t" style="top:299px;right:965px;">8</span><div class="c1" style="top:296px"></div><span class="t" style="top:299px;left:242.7px;letter-spacing:-0.70px;">Games</span><div class="c2" style="top:296px"></div><span class="t" style="top:299px;right:801px;">4281,33</span><div class="rh" style="top:315px"><i></i></div><span class="t" style="top:318px;right:965px;">9</span><div class="c1" style="top:315px"></div><span class="t" style="top:318px;left:242.7px;letter-spacing:-0.31px;">Foreign</span><div class="c2" style="top:315px"></div><span class="t" style="top:318px;right:801px;">4270,67</span><div class="rh" style="top:334px"><i></i></div><span class="t" style="top:337px;right:965px;">10</span><div class="c1" style="top:334px"></div><span class="t" style="top:337px;left:242.7px;letter-spacing:-0.60px;">Family</span><div class="c2" style="top:334px"></div><span class="t" style="top:337px;right:801px;">4226,07</span><div class="rh" style="top:353px"><i></i></div><span class="t" style="top:356px;right:965px;">11</span><div class="c1" style="top:353px"></div><span class="t" style="top:356px;left:242.7px;letter-spacing:-0.21px;">Documentary</span><div class="c2" style="top:353px"></div><span class="t" style="top:356px;right:801px;">4217,52</span><div class="rh" style="top:372px"><i></i></div><span class="t" style="top:375px;right:965px;">12</span><div class="c1" style="top:372px"></div><span class="t" style="top:375px;left:242.7px;letter-spacing:-0.23px;">Horror</span><div class="c2" style="top:372px"></div><span class="t" style="top:375px;right:801px;">3722,54</span><div class="rh" style="top:391px"><i></i></div><span class="t" style="top:394px;right:965px;">13</span><div class="c1" style="top:391px"></div><span class="t" style="top:394px;left:242.7px;letter-spacing:-0.33px;">Children</span><div class="c2" style="top:391px"></div><span class="t" style="top:394px;right:801px;">3655,55</span><div class="rh" style="top:410px"><i></i></div><span class="t" style="top:413px;right:965px;">14</span><div class="c1" style="top:410px"></div><span class="t" style="top:413px;left:242.7px;letter-spacing:-0.54px;">Classics</span><div class="c2" style="top:410px"></div><span class="t" style="top:413px;right:801px;">3639,59</span><div class="rh" style="top:429px"><i></i></div><span class="t" style="top:432px;right:965px;">15</span><div class="c1" style="top:429px"></div><span class="t" style="top:432px;left:242.7px;letter-spacing:-0.16px;">Travel</span><div class="c2" style="top:429px"></div><span class="t" style="top:432px;right:801px;">3549,64</span><div class="rh" style="top:448px"><i></i></div><span class="t" style="top:451px;right:965px;">16</span><div class="c1" style="top:448px"></div><span class="t" style="top:451px;left:242.7px;letter-spacing:-0.55px;">Music</span><div class="c2" style="top:448px"></div><span class="t" style="top:451px;right:801px;">3417,72</span><div class="bluebar" style="left:193px;top:619px;width:989px;height:19px"></div><div class="sec" style="left:193px;top:620px;width:223px;height:17px"></div><div class="sec" style="left:418px;top:620px;width:102px;height:17px"></div><div class="sec" style="left:522px;top:620px;width:102px;height:17px"></div><div class="sec" style="left:626px;top:620px;width:556px;height:17px"></div><span class="t" style="top:623px;left:196.1px;letter-spacing:-0.02px;">Records fetched: 16</span><svg width="296" height="7" style="left:542px;top:643px"><defs><pattern id="pdh" width="6" height="6" patternUnits="userSpaceOnUse"><rect x="1" y="1" width="2" height="2" fill="#fff"/><rect x="0" y="0" width="2" height="2" fill="#8e8e8e"/><rect x="4" y="4" width="2" height="2" fill="#fff"/><rect x="3" y="3" width="2" height="2" fill="#8e8e8e"/></pattern></defs><rect width="294" height="6" fill="url(#pdh)"/></svg><div style="left:189px;top:650px;width:996px;height:63px;background:#fff;border:1px solid #a0a0a0"></div><div style="left:191px;top:652px;width:22px;height:59px;background:#f0f0f0"></div><div style="left:213px;top:651px;width:2px;height:61px;background:#a0a0a0"></div><div style="left:215px;top:651px;width:969px;height:1px;background:#a0a0a0"></div><div style="left:215px;top:652px;width:969px;height:17px;background:linear-gradient(#f4f4f4,#dadada);box-shadow:inset 1px 1px 0 #fff"></div><div style="left:215px;top:669px;width:969px;height:2px;background:#a0a0a0"></div><svg width="10" height="9" style="left:197px;top:658px"><path d="M1.2,1.2l7.4,6.6M8.6,1.2l-7.4,6.6" stroke="#000" stroke-width="1.5"/></svg><svg width="18" height="16" style="left:217px;top:652px"><g transform="translate(0,0.3)"><path d="M9,.6c4.6,0 7.8,2.2 7.8,5c0,2.9 -3.4,5 -7.6,5c-.6,0 -1.2,0 -1.7,-.1l-2.9,3.7l.7,-4.3c-2.7,-.7 -4.5,-2.4 -4.5,-4.3c0,-2.8 3.6,-5 8.2,-5z" fill="url(#ginfo)" stroke="url(#ginfos)" stroke-width="1"/><text x="9.4" y="10" text-anchor="middle" font-weight="bold" fill="#0c108c" stroke="#0c108c" stroke-width=".3" style="font-family:'Liberation Serif',serif;font-size:11.5px">i</text></g></svg><span class="t" style="top:655px;left:237.1px;letter-spacing:-0.09px;">Information</span><span class="t" style="top:674px;left:217.1px;letter-spacing:-0.06px;">16 rows fetched (0,39 sec)</span>
<div class="bluebar" style="left:0;top:718px;width:1190px;height:19px"></div><div class="sec" style="left:0px;top:719px;width:303px;height:17px"></div><div class="sec" style="left:305px;top:719px;width:82px;height:17px"></div><div class="sec" style="left:389px;top:719px;width:801px;height:17px"></div><span class="t" style="top:722px;left:3.1px;letter-spacing:-0.11px;">Database: sakila at toliman</span><span class="t" style="top:722px;left:320.6px;">1:</span><span class="t" style="top:722px;left:345.6px;">1</span>
</body></html>
